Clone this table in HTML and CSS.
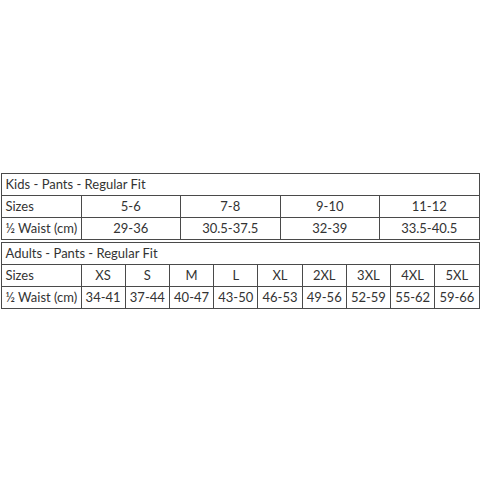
FILE: index.html
```html
<!DOCTYPE html>
<html>
<head>
<meta charset="utf-8">
<link rel="stylesheet" href="styles.css">
</head>
<body>
<div class="page">
  <table class="chart kids">
    <colgroup><col class="c-label"><col><col><col><col></colgroup>
    <tr><td class="title" colspan="5">Kids - Pants - Regular Fit</td></tr>
    <tr><td class="label">Sizes</td><td>5-6</td><td>7-8</td><td>9-10</td><td>11-12</td></tr>
    <tr><td class="label">½ Waist (cm)</td><td>29-36</td><td>30.5-37.5</td><td>32-39</td><td>33.5-40.5</td></tr>
  </table>
  <table class="chart adults">
    <colgroup><col class="c-label"><col><col><col><col><col><col><col><col><col></colgroup>
    <tr><td class="title" colspan="10">Adults - Pants - Regular Fit</td></tr>
    <tr><td class="label">Sizes</td><td>XS</td><td>S</td><td>M</td><td>L</td><td>XL</td><td>2XL</td><td>3XL</td><td>4XL</td><td>5XL</td></tr>
    <tr><td class="label">½ Waist (cm)</td><td>34-41</td><td>37-44</td><td>40-47</td><td>43-50</td><td>46-53</td><td>49-56</td><td>52-59</td><td>55-62</td><td>59-66</td></tr>
  </table>
</div>
</body>
</html>
```
FILE: styles.css
```css
html, body {
  margin: 0;
  padding: 0;
  background: #ffffff;
}
.page {
  width: 480px;
  height: 480px;
  padding-top: 173px;
  box-sizing: border-box;
  display: flex;
  flex-direction: column;
  align-items: center;
  gap: 2px;
}
.chart {
  width: 479px;
  border-collapse: collapse;
  table-layout: fixed;
  font-family: Lato, "Open Sans", "Liberation Sans", sans-serif;
  font-size: 13px;
  color: #333333;
}
.chart col.c-label {
  width: 80px;
}
.chart td {
  border: 1px solid #4a4a4a;
  height: 21px;
  padding: 0 4px;
  text-align: center;
  white-space: nowrap;
  line-height: 21px;
}
.chart td.title,
.chart td.label {
  text-align: left;
}
```
